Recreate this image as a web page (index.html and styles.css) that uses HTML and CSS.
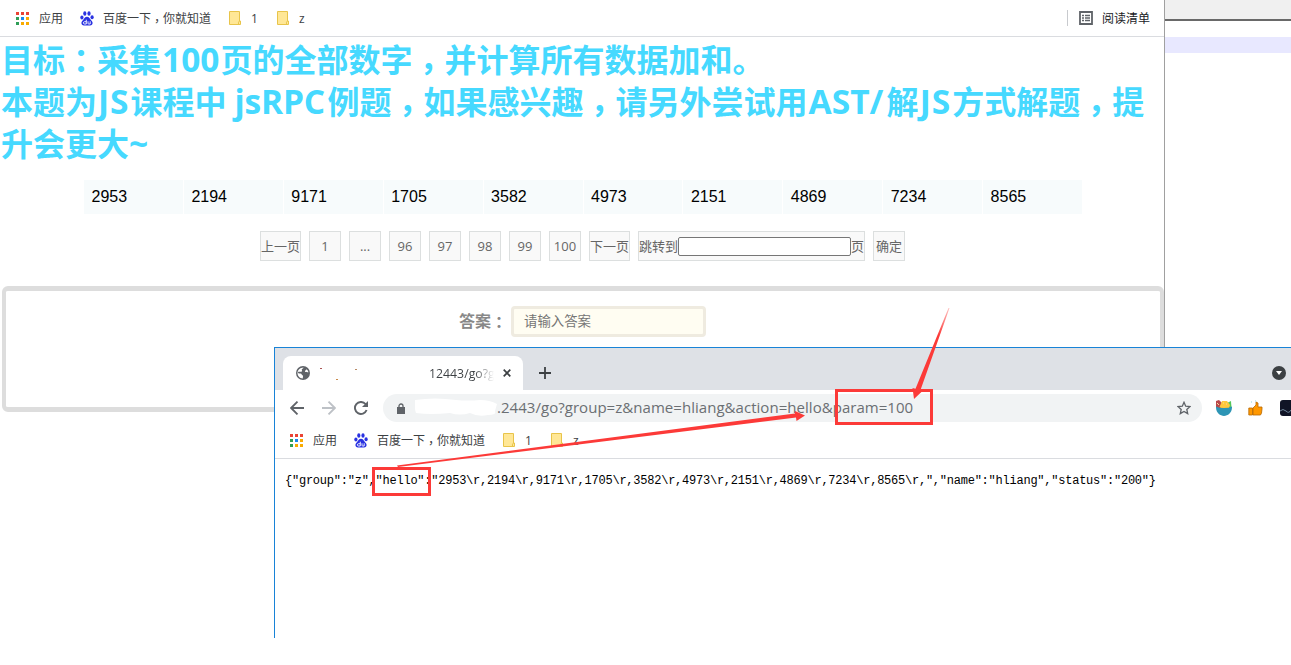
FILE: index.html
```html
<!DOCTYPE html>
<html lang="zh-CN">
<head>
<meta charset="utf-8">
<title>jsRPC</title>
<link rel="stylesheet" href="styles.css">
</head>
<body>
<svg class="defs" aria-hidden="true">
  <symbol id="apps" viewBox="0 0 13 13">
    <path fill="#ea4335" d="M0 0h3v3H0zM5 0h3v3H5zM10 0h3v3h-3z"/>
    <path fill="#2f9e57" d="M0 5h3v3H0zM0 10h3v3H0z"/>
    <path fill="#1a88f0" d="M5 5h3v3H5z"/>
    <path fill="#f9ab00" d="M10 5h3v3h-3zM5 10h3v3H5zM10 10h3v3h-3z"/>
  </symbol>
  <symbol id="paw" viewBox="0 0 14 15">
    <g fill="#2932e1">
      <ellipse cx="1.9" cy="6.4" rx="1.6" ry="2"/><ellipse cx="4.8" cy="2.5" rx="1.6" ry="2.2"/>
      <ellipse cx="9" cy="2.5" rx="1.6" ry="2.2"/><ellipse cx="12.1" cy="6.2" rx="1.6" ry="2"/>
      <path d="M7 5.8c2 0 2.600 1.800 3.900 3.100 1.500 1.400 2 2.600 1.500 4C11.800 14.500 10 14.700 7 14.500 4 14.700 2.200 14.500 1.600 12.900c-.5-1.400 0-2.600 1.500-4C4.400 7.600 5 5.800 7 5.800z"/>
    </g>
    <path d="M6.300 8.700v4.300H4.500c-1.500 0-1.500-2.300 0-2.300h1.800M8 10.300v2.100c0 .5.300.6.700.6h1.500v-2.700" fill="none" stroke="#fff" stroke-width=".9"/>
  </symbol>
  <symbol id="folder" viewBox="0 0 12 14">
    <path d="M.5.500h10v9.500h1v3.500H.5z" fill="#ffe796" stroke="#e8c44a"/>
    <path d="M9.500 13.500v-2.300l1-1.200" fill="none" stroke="#e8c44a"/>
  </symbol>
</svg>

<div class="desktop">
  <main class="back">
    <nav class="bookmarks">
      <svg class="i-apps"><use href="#apps"/></svg><span class="b-apps">应用</span>
      <svg class="i-paw"><use href="#paw"/></svg><span class="b-baidu">百度一下<i>，</i>你就知道</span>
      <svg class="i-folder"><use href="#folder"/></svg><span class="b-one">1</span>
      <svg class="i-folder"><use href="#folder"/></svg><span class="b-z">z</span>
      <div class="reading">
        <svg class="i-list" viewBox="0 0 14 14"><path d="M1 1h12v12H1z" fill="#fff" stroke="#5f6368" stroke-width="1.800"/><path d="M3 4.500h2m1 0h5M3 7h2m1 0h5M3 9.500h2m1 0h5" stroke="#5f6368" stroke-width="1.300"/></svg>
        <span>阅读清单</span>
      </div>
    </nav>
    <h1>目标<i class="colon">：</i>采集<b class="n100">100</b>页的全部数字<i>，</i>并计算所有数据加和。<br>本题为<b class="js">JS</b>课程中<b class="rpc">jsRPC</b>例题<i>，</i>如果感兴趣<i>，</i>请另外尝试用<b class="ast">AST/</b>解<b class="js">JS</b>方式解题<i>，</i>提<br>升会更大<b>~</b></h1>
    <div class="numbers">
      <span>2953</span><span>2194</span><span>9171</span><span>1705</span><span>3582</span><span>4973</span><span>2151</span><span>4869</span><span>7234</span><span>8565</span>
    </div>
    <div class="pager">
      <span>上一页</span><span>1</span><span>...</span><span>96</span><span>97</span><span>98</span><span>99</span><span>100</span><span>下一页</span><span>跳转到<input type="text">页</span><span>确定</span>
    </div>
    <section class="answer">
      <label>答案<i class="colon">：</i></label><div class="field">请输入答案</div>
    </section>
  </main>
  <aside class="side"><div class="side-bar"></div><div class="side-line"></div></aside>
</div>

<section class="window">
  <header class="tabs">
    <div class="tab">
      <svg class="i-globe" viewBox="0 0 14 14"><circle cx="7" cy="7" r="7" fill="#5f6368"/><path d="M7.500 1.400c-.2 1.200-1.300 1-1.700 1.900-.3.900.7 1.400 0 2.100-.8.700-1.800-.1-3.900.5.200 1.600 1.500 1.600 2.700 1.700 1.200.2.800 1.400 1.800 1.600.9.200.7 1.300.3 3.200C3.700 12.300 1.500 10 1.500 7S4 1.500 7.500 1.400zM12.500 6.200c-1.300-.3-2.300.1-3.500-.5-.5-1.200 1-1.400 1.500-2.400 1 .7 1.700 1.700 2 2.900z" fill="#fff"/></svg>
      <svg class="specks" viewBox="0 0 40 14"><path d="M1 2h2v1H1z" fill="#a55"/><path d="M17 13h2v1h-2z" fill="#c98a4a"/><path d="M36 3h2v1h-2z" fill="#b88a66"/></svg>
      <span class="title">12443/go?g</span>
      <svg class="i-close" viewBox="0 0 8 8"><path d="M.7.7l6.600 6.600M7.300.7L.7 7.300" stroke="#3c4043" stroke-width="1.700"/></svg>
    </div>
    <svg class="i-plus" viewBox="0 0 12 12"><path d="M6 0v12M0 6h12" stroke="#3c4043" stroke-width="1.800"/></svg>
    <svg class="i-down" viewBox="0 0 14 14"><circle cx="7" cy="7" r="7" fill="#3c4043"/><path d="M4 5h6L7 9z" fill="#fff"/></svg>
  </header>
  <div class="toolbar">
    <svg class="i-nav" viewBox="0 0 14 14"><path d="M14 7H1.500M7.500 .6L1.100 7l6.400 6.400" fill="none" stroke="#5f6368" stroke-width="1.800"/></svg>
    <svg class="i-nav" viewBox="0 0 14 14"><path d="M0 7h12.500M6.500 .6L12.900 7l-6.400 6.400" fill="none" stroke="#bdc1c6" stroke-width="1.800"/></svg>
    <svg class="i-nav" viewBox="0 0 14 14"><path d="M12.600 9A6 6 0 1 1 11.500 3l1.300 1.500" fill="none" stroke="#5f6368" stroke-width="1.900"/><path d="M14 0v6H8z" fill="#5f6368"/></svg>
    <div class="address">
      <svg class="i-lock" viewBox="0 0 8 11"><path d="M0 4h8v7H0z" fill="#5f6368"/><path d="M2 4.500V3a2 2 0 0 1 4 0v1.500" fill="none" stroke="#5f6368" stroke-width="1.300"/></svg>
      <svg class="smudge" viewBox="0 0 84 20"><path d="M0 2q20-3 41 0 12 1 24 0 10 0 17 4l-2 7q2 4-7 4-10 2-18-2-10 3-20 0-20 2-34 0-2-6-1-13z" fill="#fff"/></svg>
      <span class="url">.2443/go?group=z&amp;name=hliang&amp;action=hello&amp;param=100</span>
      <svg class="i-star" viewBox="0 0 14 14"><path d="M7 1.300l1.700 3.900 4.300.4-3.200 2.800.9 4.200L7 10.400l-3.700 2.200.9-4.200L1 5.600l4.300-.4z" fill="none" stroke="#5f6368" stroke-width="1.300"/></svg>
    </div>
    <svg class="i-bowl" viewBox="0 0 16 16"><path d="M0 1l3-1 4 4v4H0z" fill="#b9474b"/><path d="M11 3l4-2 .5 7H10z" fill="#55c65b"/><path d="M3.500 7L5 3.500 6 1h5l3 4-1 3H5z" fill="#ffc83d"/><path d="M0 6.500q3 1.500 8 1.500t8-1.500C16.500 19 -.5 19 0 6.500z" fill="#2d95b5"/><path d="M1 3l2 2m4-2h1m2 1h1" stroke="#f5e19b"/></svg>
    <svg class="i-thumb" viewBox="0 0 15 16"><path d="M.8 8h3.700v7H.8zM5 8l3-3V2l2 1v4h4v2l-.5 4-1 2H5z" fill="#ff9800" stroke="#b86800" stroke-width=".8"/><path d="M3 2h1m3-1h1" stroke="#91d7dc"/></svg>
    <svg class="i-dark" viewBox="0 0 11 16"><rect width="15" height="16" rx="3" fill="#101426"/><path d="M0 11q3-3 6 0t5-1" fill="none" stroke="#71869b"/></svg>
  </div>
  <nav class="bookmarks">
    <svg class="i-apps"><use href="#apps"/></svg><span class="b-apps">应用</span>
    <svg class="i-paw"><use href="#paw"/></svg><span class="b-baidu">百度一下<i>，</i>你就知道</span>
    <svg class="i-folder"><use href="#folder"/></svg><span class="b-one">1</span>
    <svg class="i-folder"><use href="#folder"/></svg><span class="b-z">z</span>
  </nav>
  <pre class="json">{"group":"z","hello":"2953\r,2194\r,9171\r,1705\r,3582\r,4973\r,2151\r,4869\r,7234\r,8565\r,","name":"hliang","status":"200"}</pre>
</section>

<svg class="marks" viewBox="0 0 1291 665">
  <defs><linearGradient id="fade" x1="0" y1="0" x2="0" y2="1"><stop offset="0" stop-color="#fc3a38" stop-opacity=".3"/><stop offset=".3" stop-color="#fc3a38"/></linearGradient></defs>
  <path d="M373.500 468.500h56v26h-56zM836.500 390.500h95v33h-95z" fill="none" stroke="#fc3a38" stroke-width="3"/>
  <path d="M397 465.500L795 413.500l0-2.500 10 4.500-8.500 5.500-.5-3.500L398 467z" fill="#fc3a38"/>
  <path d="M948.500 308h1L920.500 390l2 1-8.500 8-1.500-11 3 .8z" fill="url(#fade)"/>
</svg>
</body>
</html>
```

FILE: styles.css
```css
* { box-sizing: border-box; }
body {
  margin: 0;
  width: 1291px;
  height: 665px;
  overflow: hidden;
  position: relative;
  background: #fff;
  font-family: "Open Sans", "Noto Sans CJK SC", sans-serif;
}
svg { display: block; flex: none; }
/* Full-width punctuation is centred in its cell; the comma sits on the baseline. */
i {
  font-style: normal;
  font-family: "Noto Sans CJK TC", sans-serif;
  font-feature-settings: "locl" 0;
  -webkit-locale: "zh-TW";
  line-height: 0;
  vertical-align: -0.26em;
}
i.colon { vertical-align: -0.04em; }
.defs { position: absolute; width: 0; height: 0; }

.desktop { display: flex; height: 347px; }
.back { width: 1165px; border-right: 1px solid #a0a0a0; }
.side { flex: 1; }
.side-bar { height: 21px; background: #f0f0f0; border-bottom: 2px solid #696969; }
.side-line { height: 16px; margin-top: 16px; background: #e8e8ff; }

.bookmarks {
  display: flex;
  align-items: center;
  height: 37px;
  padding-left: 16px;
  border-bottom: 1px solid #dadce0;
  font-size: 12px;
  line-height: 18px;
  color: #3c4043;
  white-space: nowrap;
}
.bookmarks span { padding-top: 1px; }
.i-apps { width: 13px; height: 13px; margin-right: 10px; }
.b-apps { width: 41px; }
.i-paw { width: 14px; height: 15px; margin-right: 9px; }
.b-baidu { width: 126px; }
.i-folder { width: 12px; height: 14px; margin-right: 10px; }
.b-one { width: 26px; }
.reading {
  display: flex;
  align-items: center;
  height: 16px;
  margin-left: auto;
  margin-right: 14px;
  padding-left: 11px;
  border-left: 1px solid #c8cace;
  color: #202124;
}
.i-list { width: 14px; height: 14px; margin-right: 9px; }

h1 {
  height: 126px;
  margin: 2px 0 0 1px;
  font-size: 32px;
  line-height: 42px;
  color: #46d9ff;
  white-space: nowrap;
}
h1 b { display: inline-block; font-weight: 700; font-size: 33.500px; line-height: 32px; }
.n100 { width: 59.5px; padding-left: 1px; }
.js { width: 33.5px; padding-left: 1px; letter-spacing: 1px; }
.rpc { width: 101px; padding-left: 8px; letter-spacing: -0.2px; }
.ast { width: 79px; padding-left: 1px; }

.numbers {
  display: grid;
  grid-template-columns: repeat(10, 1fr);
  column-gap: 1px;
  width: 998px;
  height: 34px;
  margin: 15px 0 0 84px;
  font: 16px/33px "Liberation Sans", sans-serif;
  color: #000;
}
.numbers span { padding-left: 7.500px; background: #f7fbfc; }

.pager {
  display: flex;
  gap: 8px;
  height: 30px;
  margin: 17px 0 0 260px;
  font-size: 13px;
  line-height: 28px;
  color: #666;
}
.pager span {
  display: flex;
  align-items: center;
  justify-content: center;
  min-width: 32px;
  border: 1px solid #dcdfdf;
  background: #f9f9f9;
}
.pager input {
  width: 173px;
  height: 19px;
  padding: 0;
  border: 1px solid #767676;
  border-radius: 2px;
  background: #fff;
}

.answer {
  display: flex;
  align-items: flex-start;
  width: 1162px;
  height: 126px;
  margin: 25px 0 0 2px;
  padding: 15px 0 0 453px;
  border: 5px solid #ddd;
  border-left-width: 4px;
  border-right-width: 4px;
  border-radius: 6px;
}
.answer label { width: 52px; font-size: 16px; line-height: 30px; font-weight: 700; color: #888; white-space: nowrap; }
.field {
  width: 195px;
  height: 31px;
  padding-left: 10px;
  border: 3px solid #efebe0;
  border-radius: 4px;
  background: #fffdf2;
  font-size: 13.400px;
  line-height: 24px;
  color: #757575;
}

.window {
  position: absolute;
  left: 274px;
  top: 347px;
  width: 1017px;
  height: 291px;
  border-left: 1px solid #1883d7;
  border-top: 1px solid #1883d7;
  background: #fff;
}
.tabs { display: flex; align-items: center; height: 42px; background: #dee1e6; padding: 8px 5px 0 8px; }
.tab {
  display: flex;
  align-items: center;
  width: 240px;
  height: 34px;
  padding-left: 13px;
  border-radius: 8px 8px 0 0;
  background: #fff;
}
.i-globe { width: 14px; height: 14px; margin-right: 9px; }
.specks { width: 40px; height: 14px; }
.title {
  width: 65px;
  margin-left: 70px;
  overflow: hidden;
  font-size: 12.300px;
  background: linear-gradient(90deg, #3c4043 70%, #fff 100%);
  -webkit-background-clip: text;
  color: transparent;
  white-space: nowrap;
}
.i-close { width: 8px; height: 8px; margin-left: 9px; }
.i-plus { width: 12px; height: 12px; margin-left: 16px; }
.i-down { width: 14px; height: 14px; margin-left: auto; }
.toolbar { display: flex; align-items: center; height: 36px; padding-left: 15px; }
.i-nav { width: 14px; height: 14px; margin-right: 18px; }
.address {
  display: flex;
  align-items: center;
  width: 819px;
  height: 28px;
  margin-left: -3px;
  padding: 0 11px 0 14px;
  border-radius: 14px;
  background: #f1f3f4;
}
.i-lock { width: 8px; height: 11px; }
.smudge { width: 84px; height: 20px; margin-left: 10px; }
.url {
  margin: -2px 0 0 -2px;
  font-size: 15px;
  letter-spacing: 0.04px;
  color: #6b6f73;
  white-space: nowrap;
}
.i-star { width: 14px; height: 14px; margin-left: auto; }
.i-bowl { width: 16px; height: 16px; margin-left: 14px; }
.i-thumb { width: 15px; height: 16px; margin-left: 16px; }
.i-dark { width: 11px; height: 16px; margin-left: 17px; }
.window .bookmarks { height: 33px; padding-left: 15px; padding-bottom: 4px; }
.json {
  margin: 14px 0 0 10px;
  font: 12px/16px "Liberation Mono", monospace;
  letter-spacing: -0.235px;
  color: #000;
}
.marks { position: absolute; left: 0; top: 0; width: 1291px; height: 665px; }
```
